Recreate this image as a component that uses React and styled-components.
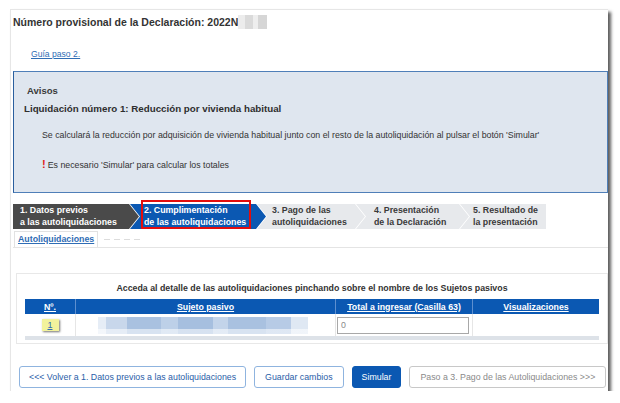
import React from 'react';
import styled, { createGlobalStyle } from 'styled-components';

const GlobalStyle = createGlobalStyle`
  body {
    margin: 0;
    background: #ffffff;
    font-family: "Liberation Sans", Arial, sans-serif;
    color: #333;
  }
`;

const Panel = styled.div`
  margin: 9px 0 0 10px;
  width: 598px;
  height: 382px;
  box-sizing: border-box;
  background: #fff;
  border-top: 1px solid #e6e6e6;
  border-left: 1px solid #e6e6e6;
  box-shadow: 3px 3px 3px rgba(40, 40, 40, 0.75);
  display: flex;
  flex-direction: column;
  padding-left: 2px;
`;

const Title = styled.h1`
  margin: 5px 0 0;
  font-size: 10.5px;
  line-height: 14px;
  font-weight: bold;
  color: #333;
  display: flex;
  align-items: center;
`;

const Blur = styled.span`
  display: inline-block;
  width: 29px;
  height: 14px;
  background: linear-gradient(90deg, #ececec 0 25%, #dadada 25% 50%, #eeeeee 50% 70%, #d6d6d6 70% 100%);
`;

const GuideLink = styled.a`
  margin: 19px 0 0 18px;
  font-size: 8.6px;
  line-height: 12px;
  color: #2f6db5;
  text-decoration: underline;
`;

const Notice = styled.div`
  margin-top: 11px;
  height: 122px;
  box-sizing: border-box;
  background: #dfe6ef;
  border: 1px solid #4f7fb8;
  border-left-color: #2b5f9e;
  padding: 12px 10px 0 10px;
`;

const NoticeHead = styled.div`
  font-size: ${p => (p.$strong ? 9.75 : 9.5)}px;
  font-weight: bold;
  line-height: 14px;
  color: ${p => (p.$strong ? '#2e2e2e' : '#3a3a3a')};
  margin-left: ${p => p.$indent || 0}px;
  margin-top: ${p => p.$top || 0}px;
`;

const NoticeText = styled.p`
  margin: ${p => p.$top}px 0 0 18px;
  font-size: 8.8px;
  line-height: 12px;
  color: #333;
`;

const Bang = styled.span`
  color: #e02020;
  font-weight: bold;
  font-size: 11px;
  margin-right: 2px;
`;

const Steps = styled.div`
  margin-top: 11px;
  display: flex;
  height: 25px;
`;

const Step = styled.div`
  position: relative;
  width: ${p => p.$w}px;
  margin-left: ${p => (p.$first || p.$inner ? 0 : -9)}px;
  flex-shrink: 0;
  box-sizing: border-box;
  padding-left: ${p => (p.$first ? 7 : p.$pad || 14)}px;
  display: flex;
  flex-direction: column;
  justify-content: center;
  font-size: 8.8px;
  line-height: 11.5px;
  font-weight: bold;
  white-space: nowrap;
  background: ${p => (p.$kind === 'done' ? '#4a4a4a' : p.$kind === 'active' ? '#0b58b2' : '#e7e9ec')};
  color: ${p => (p.$kind === 'todo' ? '#3a3a3a' : '#fff')};
  clip-path: ${p =>
    p.$first
      ? 'polygon(0 0, calc(100% - 10px) 0, 100% 50%, calc(100% - 10px) 100%, 0 100%)'
      : p.$last
      ? 'polygon(0 0, 100% 0, 100% 100%, 0 100%, 10px 50%)'
      : 'polygon(0 0, calc(100% - 10px) 0, 100% 50%, calc(100% - 10px) 100%, 0 100%, 10px 50%)'};
`;

const StepWrap = styled.div`
  position: relative;
  display: flex;
  margin-left: -9px;
`;

const Highlight = styled.div`
  position: absolute;
  left: 11px;
  top: -4px;
  width: 110px;
  height: 29px;
  box-sizing: border-box;
  border: 2px solid #e30d0d;
  pointer-events: none;
`;

const Tabs = styled.div`
  margin-top: 2px;
  display: flex;
  align-items: flex-end;
  border-bottom: 1px solid #e4e4e4;
  height: 16px;
`;

const Tab = styled.a`
  display: block;
  height: 16px;
  box-sizing: border-box;
  padding: 1px 3px 0 3px;
  margin-left: 1px;
  border: 1px solid #e2e2e2;
  border-bottom: none;
  font-size: 8.8px;
  font-weight: bold;
  color: #2f6db5;
  text-decoration: underline;
  line-height: 12px;
`;

const FadedTab = styled.span`
  margin: 0 0 7px 6px;
  width: 40px;
  height: 1px;
  background: repeating-linear-gradient(90deg, #dcdcdc 0 6px, transparent 6px 10px);
`;

const TableBox = styled.div`
  margin: 25px 0 0 3px;
  width: 592px;
  height: 71px;
  box-sizing: border-box;
  border: 1px solid #e8e8e8;
  padding: 0 8px;
`;

const Caption = styled.div`
  text-align: center;
  font-size: 8.8px;
  font-weight: bold;
  color: #333;
  line-height: 12px;
  margin-top: 8px;
`;

const Grid = styled.table`
  margin-top: 5px;
  width: 574px;
  border-collapse: collapse;
  font-size: 8.8px;
`;

const Th = styled.th`
  background: #0b58b2;
  color: #fff;
  height: 15px;
  padding: 0;
  font-weight: bold;
  text-decoration: underline;
  width: ${p => p.$w}px;
  border-left: 1px solid #5e8fcf;
  &:first-child { border-left: none; }
`;

const Td = styled.td`
  height: 22px;
  padding: 0;
  border-left: 1px solid #e6e6e6;
  text-align: ${p => p.$align || 'left'};
  &:first-child { border-left: none; }
`;

const Badge = styled.a`
  display: inline-block;
  width: 17px;
  height: 12px;
  line-height: 12px;
  background: #f2f29c;
  box-shadow: 1px 1px 2px rgba(0, 0, 0, 0.55);
  color: #2f6db5;
  text-decoration: underline;
  font-size: 9px;
  text-align: center;
`;

const NameBlur = styled.div`
  margin-left: 22px;
  width: 210px;
  height: 17px;
  background:
    linear-gradient(180deg, transparent 0 70%, rgba(255,255,255,0.55) 70% 100%),
    linear-gradient(90deg, #e6edf6 0 4%, #c8d7eb 4% 14%, #a9c1e0 14% 30%, #bdd0e8 30% 38%, #a6bfdf 38% 55%, #c3d4ea 55% 62%, #a9c1e0 62% 80%, #b7cbe6 80% 92%, #dfe8f3 92% 100%);
`;

const Amount = styled.input`
  display: block;
  margin-left: 1px;
  width: 132px;
  height: 17px;
  box-sizing: border-box;
  border: 1px solid #a8a8a8;
  padding: 0 3px;
  font-family: "Liberation Sans", Arial, sans-serif;
  font-size: 8.8px;
  color: #8a8a8a;
  background: #fff;
`;

const FootRow = styled.td`
  height: 4px;
  padding: 0;
  background: #dde2e8;
`;

const Buttons = styled.div`
  margin: 22px 0 0 6px;
  display: flex;
  gap: 8px;
`;

const Button = styled.button`
  flex-shrink: 0;
  white-space: nowrap;
  height: 22px;
  box-sizing: border-box;
  padding: 0 ${p => p.$pad || 9}px;
  border-radius: 3px;
  font-family: "Liberation Sans", Arial, sans-serif;
  font-size: 8.8px;
  cursor: pointer;
  border: 1px solid ${p => (p.$variant === 'primary' ? '#0b58b2' : p.$variant === 'off' ? '#c8c8c8' : '#8fb4df')};
  background: ${p => (p.$variant === 'primary' ? '#0b58b2' : '#fff')};
  color: ${p => (p.$variant === 'primary' ? '#fff' : p.$variant === 'off' ? '#8a8a8a' : '#2a5ea8')};
`;

export default function App() {
  return (
    <>
      <GlobalStyle />
      <Panel>
        <Title>
          Número provisional de la Declaración: 2022N<Blur />
        </Title>
        <GuideLink href="#">Guía paso 2.</GuideLink>

        <Notice>
          <NoticeHead $indent={3}>Avisos</NoticeHead>
          <NoticeHead $strong $top={4}>Liquidación número 1: Reducción por vivienda habitual</NoticeHead>
          <NoticeText $top={13}>
            Se calculará la reducción por adquisición de vivienda habitual junto con el resto de la autoliquidación al pulsar el botón 'Simular'
          </NoticeText>
          <NoticeText $top={17}>
            <Bang>!</Bang>Es necesario 'Simular' para calcular los totales
          </NoticeText>
        </Notice>

        <Steps>
          <Step $first $kind="done" $w={126}>
            <span>1. Datos previos</span>
            <span>a las autoliquidaciones</span>
          </Step>
          <StepWrap>
            <Step $inner $kind="active" $w={136}>
              <span>2. Cumplimentación</span>
              <span>de las autoliquidaciones</span>
            </Step>
            <Highlight />
          </StepWrap>
          <Step $kind="todo" $w={108} $pad={15}>
            <span>3. Pago de las</span>
            <span>autoliquidaciones</span>
          </Step>
          <Step $kind="todo" $w={113} $pad={18}>
            <span>4. Presentación</span>
            <span>de la Declaración</span>
          </Step>
          <Step $last $kind="todo" $w={86} $pad={13}>
            <span>5. Resultado de</span>
            <span>la presentación</span>
          </Step>
        </Steps>

        <Tabs>
          <Tab href="#">Autoliquidaciones</Tab>
          <FadedTab />
        </Tabs>

        <TableBox>
          <Caption>Acceda al detalle de las autoliquidaciones pinchando sobre el nombre de los Sujetos pasivos</Caption>
          <Grid>
            <thead>
              <tr>
                <Th $w={50}>Nº.</Th>
                <Th $w={259}>Sujeto pasivo</Th>
                <Th $w={136}>Total a ingresar (Casilla 63)</Th>
                <Th>Visualizaciones</Th>
              </tr>
            </thead>
            <tbody>
              <tr>
                <Td $align="center"><Badge href="#">1</Badge></Td>
                <Td><NameBlur /></Td>
                <Td><Amount readOnly value="0" /></Td>
                <Td />
              </tr>
              <tr>
                <FootRow colSpan={4} />
              </tr>
            </tbody>
          </Grid>
        </TableBox>

        <Buttons>
          <Button>&lt;&lt;&lt; Volver a 1. Datos previos a las autoliquidaciones</Button>
          <Button $pad={10}>Guardar cambios</Button>
          <Button $variant="primary" $pad={9}>Simular</Button>
          <Button $variant="off" $pad={10}>Paso a 3. Pago de las Autoliquidaciones &gt;&gt;&gt;</Button>
        </Buttons>
      </Panel>
    </>
  );
}
